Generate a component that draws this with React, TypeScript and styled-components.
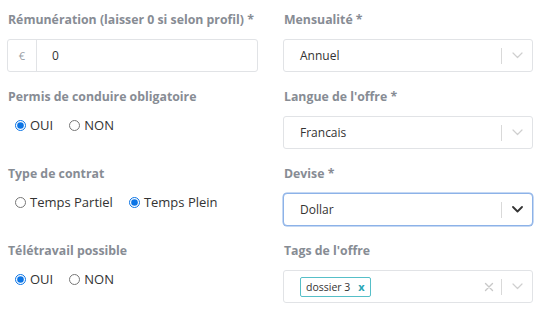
import React from "react";
import styled, { createGlobalStyle, css } from "styled-components";

const Global = createGlobalStyle`
  html, body { margin: 0; padding: 0; background: #ffffff; }
  body { font-family: "Open Sans", "Liberation Sans", sans-serif; }
  * { box-sizing: border-box; }
`;

const Form = styled.div`
  display: grid;
  grid-template-columns: 251px 250px;
  column-gap: 25px;
  row-gap: 16px;
  padding: 11px 17px 0 7px;
`;

const Field = styled.div`
  display: flex;
  flex-direction: column;
`;

const Label = styled.div`
  font-size: 12.3px;
  font-weight: 700;
  line-height: 18px;
  color: #878c94;
  padding-left: 1px;
  margin-bottom: 10px;
  white-space: nowrap;
`;

const InputGroup = styled.div`
  display: flex;
  height: 33px;
  border: 1px solid #e1e3e6;
  border-radius: 3px;
  background: #fff;
`;

const Addon = styled.div`
  width: 29px;
  display: flex;
  align-items: center;
  justify-content: center;
  border-right: 1px solid #e1e3e6;
  color: #9aa0a6;
  font-size: 11px;
`;

const InputValue = styled.div`
  flex: 1;
  display: flex;
  align-items: center;
  padding-left: 15px;
  font-size: 12px;
  color: #333;
`;

const SelectBox = styled.div<{ $focused?: boolean }>`
  display: flex;
  align-items: center;
  height: 33px;
  border: 1px solid #e1e3e6;
  border-radius: 3px;
  background: #fff;
  padding-left: 16px;
  ${(p) =>
    p.$focused &&
    css`
      border-color: #8cb2e8;
      border-radius: 4px;
      box-shadow: 0 0 0 0.5px #8cb2e8;
    `}
`;

const SelectValue = styled.div`
  flex: 1;
  font-size: 12px;
  color: #333;
`;

const Separator = styled.span`
  width: 1px;
  height: 16px;
  background: #d9d9d9;
`;

const Indicator = styled.span<{ $dark?: boolean }>`
  width: 30px;
  display: flex;
  align-items: center;
  justify-content: center;
  color: ${(p) => (p.$dark ? "#333" : "#cfcfcf")};
`;

const ClearIcon = styled.span`
  width: 24px;
  display: flex;
  align-items: center;
  justify-content: center;
  color: #c8c8c8;
`;

const Chips = styled.div`
  flex: 1;
  display: flex;
  align-items: center;
`;

const Chip = styled.span`
  display: inline-flex;
  align-items: center;
  height: 20px;
  border: 1px solid #56bfc8;
  border-radius: 2px;
  padding: 0 5px 0 5px;
  font-size: 10.5px;
  color: #333;
  white-space: nowrap;
`;

const ChipRemove = styled.span`
  margin-left: 8px;
  color: #2aa5b4;
  font-weight: 700;
  font-size: 11px;
`;

const RadioRow = styled.div`
  display: flex;
  align-items: center;
  height: 18px;
  padding-left: 8px;
  gap: 16px;
`;

const RadioOption = styled.label`
  display: inline-flex;
  align-items: center;
  gap: 4px;
  font-size: 13px;
  color: #333;
`;

const RadioInput = styled.input`
  width: 11px;
  height: 11px;
  margin: 0;
  accent-color: #0b74e5;
`;

const Chevron = ({ bold }: { bold?: boolean }) => (
  <svg width="11" height="7" viewBox="0 0 11 7" fill="none">
    <path
      d="M1 1l4.5 4.5L10 1"
      stroke="currentColor"
      strokeWidth={bold ? 1.8 : 1.2}
      strokeLinecap="round"
      strokeLinejoin="round"
    />
  </svg>
);

const Cross = () => (
  <svg width="10" height="10" viewBox="0 0 10 10" fill="none">
    <path d="M1.5 1.5l7 7M8.5 1.5l-7 7" stroke="currentColor" strokeWidth="1.4" strokeLinecap="round" />
  </svg>
);

const Radios = ({ name, options, checked }: { name: string; options: string[]; checked: string }) => (
  <RadioRow>
    {options.map((o) => (
      <RadioOption key={o}>
        <RadioInput type="radio" name={name} defaultChecked={o === checked} />
        {o}
      </RadioOption>
    ))}
  </RadioRow>
);

const Select = ({ value, focused }: { value: string; focused?: boolean }) => (
  <SelectBox $focused={focused}>
    <SelectValue>{value}</SelectValue>
    <Separator />
    <Indicator $dark={focused}>
      <Chevron bold={focused} />
    </Indicator>
  </SelectBox>
);

export default function App() {
  return (
    <>
      <Global />
      <Form>
        <Field>
          <Label>Rémunération (laisser 0 si selon profil) *</Label>
          <InputGroup>
            <Addon>€</Addon>
            <InputValue>0</InputValue>
          </InputGroup>
        </Field>
        <Field>
          <Label>Mensualité *</Label>
          <Select value="Annuel" />
        </Field>

        <Field>
          <Label>Permis de conduire obligatoire</Label>
          <Radios name="permis" options={["OUI", "NON"]} checked="OUI" />
        </Field>
        <Field>
          <Label>Langue de l'offre *</Label>
          <Select value="Francais" />
        </Field>

        <Field>
          <Label>Type de contrat</Label>
          <Radios name="contrat" options={["Temps Partiel", "Temps Plein"]} checked="Temps Plein" />
        </Field>
        <Field>
          <Label>Devise *</Label>
          <Select value="Dollar" focused />
        </Field>

        <Field>
          <Label>Télétravail possible</Label>
          <Radios name="tele" options={["OUI", "NON"]} checked="OUI" />
        </Field>
        <Field>
          <Label>Tags de l'offre</Label>
          <SelectBox>
            <Chips>
              <Chip>
                dossier 3<ChipRemove>x</ChipRemove>
              </Chip>
            </Chips>
            <ClearIcon>
              <Cross />
            </ClearIcon>
            <Separator />
            <Indicator>
              <Chevron />
            </Indicator>
          </SelectBox>
        </Field>
      </Form>
    </>
  );
}
